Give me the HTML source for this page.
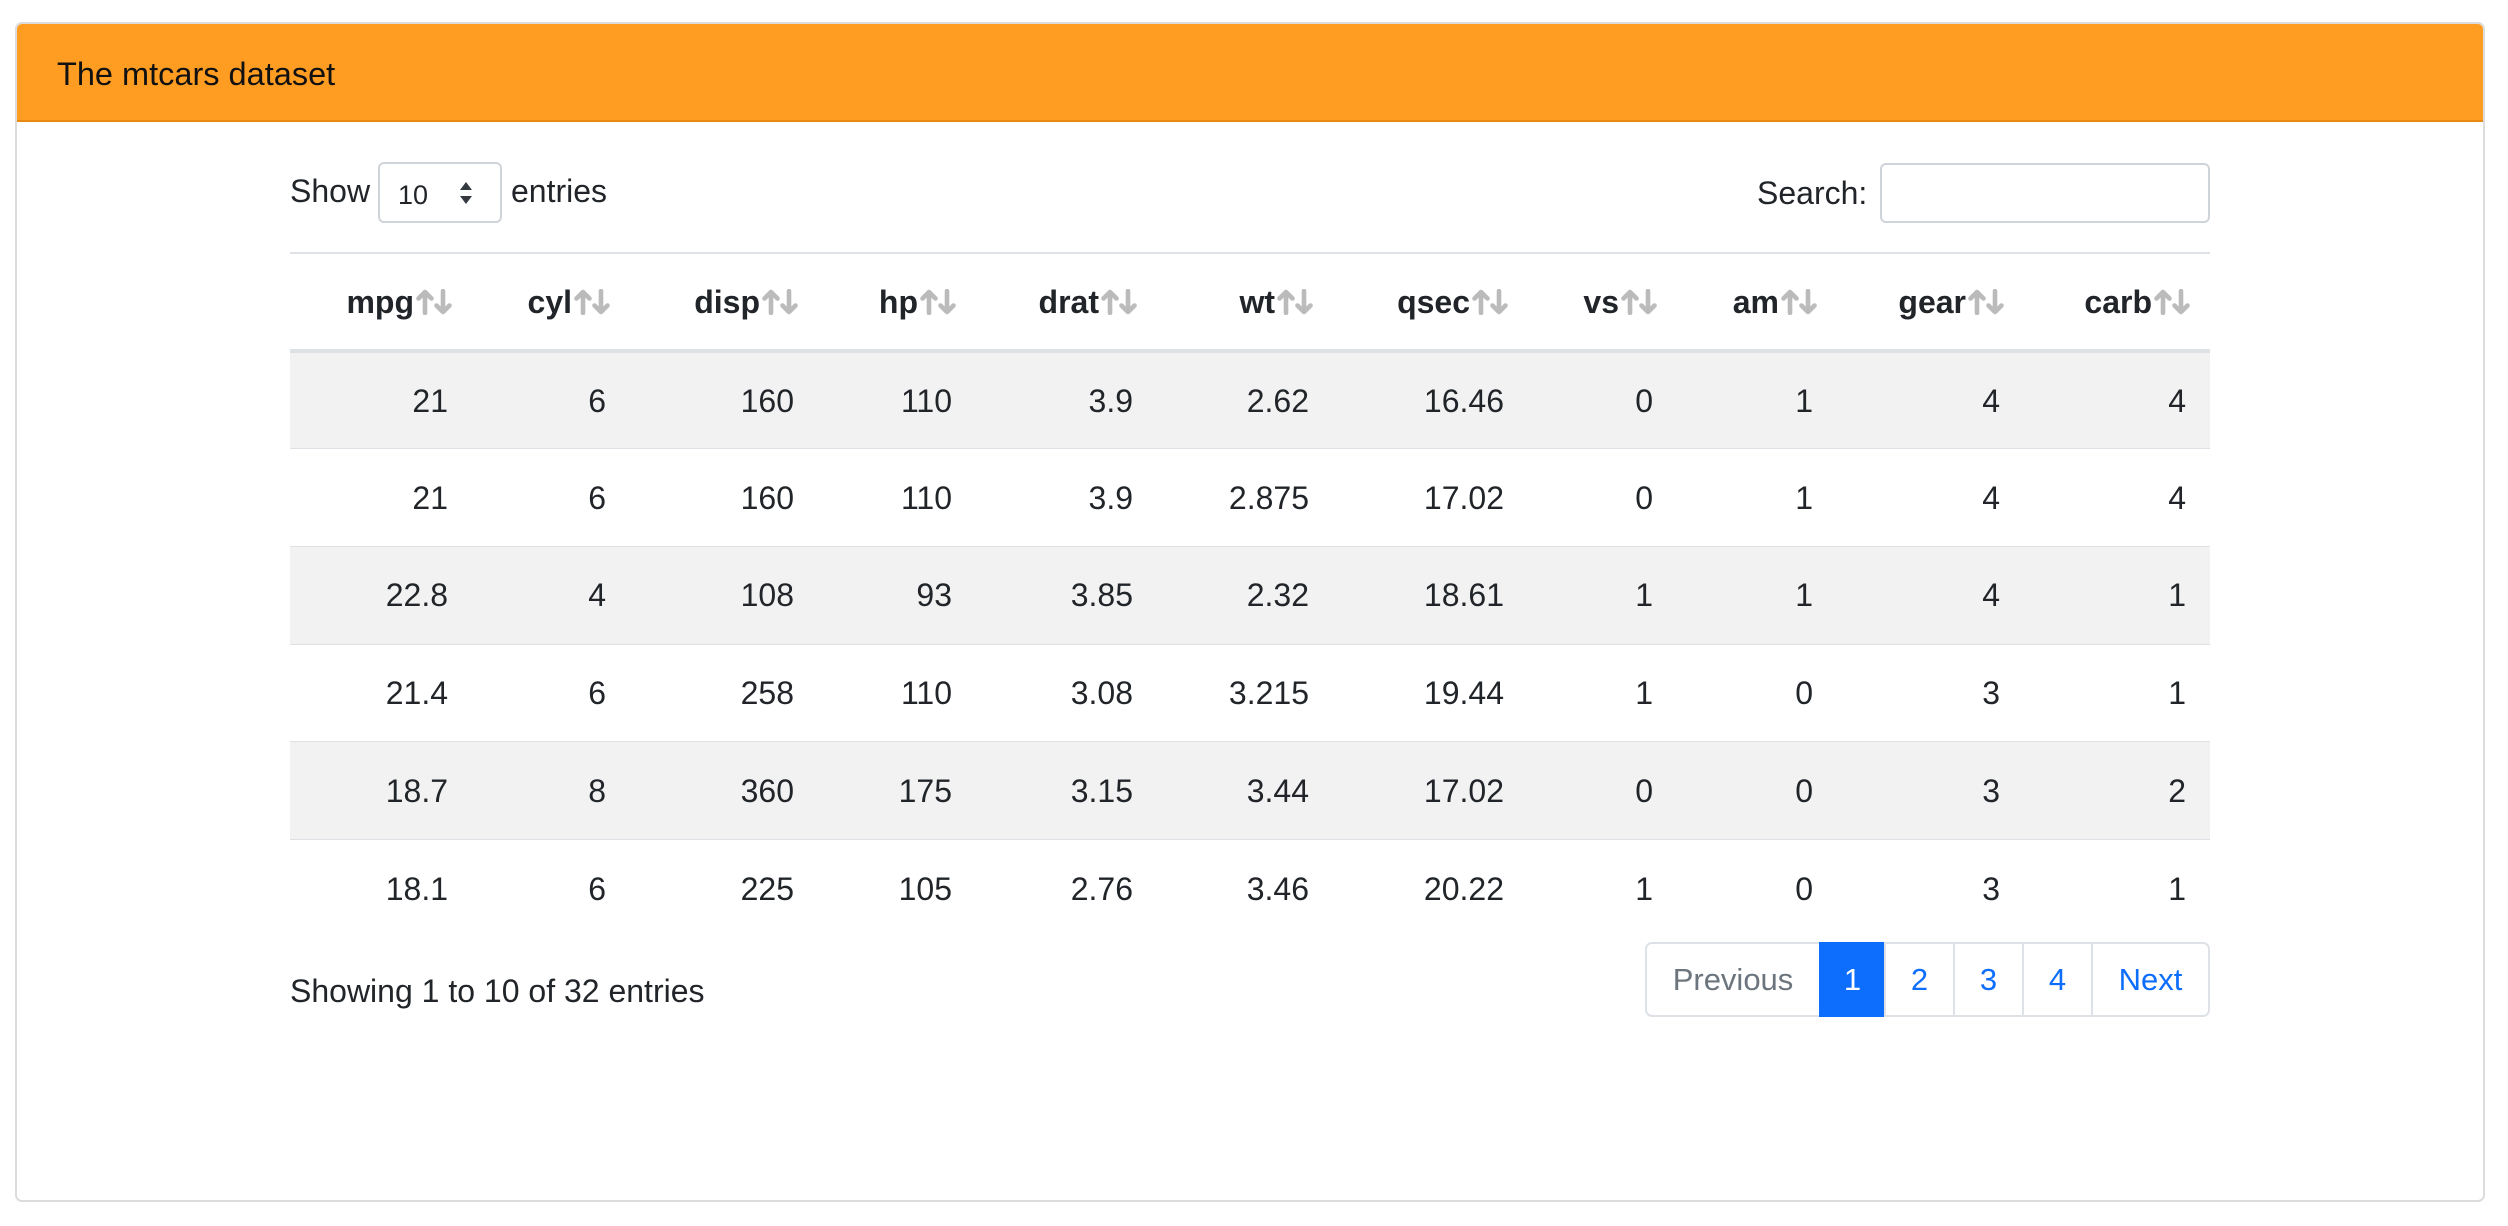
<!DOCTYPE html>
<html><head><meta charset="utf-8"><style>
*{box-sizing:border-box;margin:0;padding:0}
body{width:2508px;height:1226px;background:#fff;font-family:"Liberation Sans",Arial,sans-serif;color:#212529;position:relative;overflow:hidden;font-size:32px;line-height:1}
.card{position:absolute;left:15px;top:22px;width:2470px;height:1180px;border:2px solid #dcdcdc;border-radius:7px;overflow:hidden}
.hdr{position:absolute;left:0;top:0;right:0;height:98px;background:#ff9d23;border-bottom:2px solid #e88a10}
.hdr span{position:absolute;left:40px;top:34px;font-size:32.5px;color:#111}
.abs{position:absolute}
.sel{position:absolute;left:378px;top:162px;width:124px;height:61px;border:2px solid #ced4da;border-radius:6px;font-size:27px}
.inp{position:absolute;left:1880px;top:163px;width:330px;height:60px;border:2px solid #ced4da;border-radius:6px}
table{position:absolute;left:290px;top:252px;width:1920px;border-collapse:collapse}
table th,table td{text-align:right;padding:0 24px 0 0;white-space:nowrap}
thead tr{height:98px;border-top:2px solid #dee2e6;border-bottom:4px solid #dee2e6}
th{font-weight:bold;vertical-align:middle;padding-right:20px!important}
th svg{vertical-align:-2px;margin-left:2px}
tbody tr{height:97.7px;border-bottom:1.6px solid #dee2e6}
tbody tr:last-child{border-bottom:none}
tbody tr:nth-child(odd){background:#f2f2f2}
.pg{position:absolute;top:942px;height:75px;border:2px solid #dee2e6;display:flex;align-items:center;justify-content:center;color:#0d6efd;font-size:31px;background:#fff}
</style></head><body>
<div class="card"><div class="hdr"><span>The mtcars dataset</span></div></div>
<div class="abs" style="left:290px;top:175px">Show</div>
<div class="sel"><span class="abs" style="left:18px;top:18px">10</span>
<svg class="abs" style="left:79px;top:17px" width="14" height="24" viewBox="0 0 14 24"><path d="M7 1 L13 9 H1Z M7 23 L13 15 H1Z" fill="#343a40"/></svg></div>
<div class="abs" style="left:511px;top:175px">entries</div>
<div class="abs" style="left:1757px;top:177px">Search:</div>
<div class="inp"></div>
<table>
<colgroup><col style="width:182px"><col style="width:158px"><col style="width:188px"><col style="width:158px"><col style="width:181px"><col style="width:176px"><col style="width:195px"><col style="width:149px"><col style="width:160px"><col style="width:187px"><col style="width:186px"></colgroup>
<thead><tr>
<th>mpg<svg width="36" height="26" viewBox="0 0 36 26"><g stroke="#bbb" stroke-width="4.6" fill="none" stroke-linecap="round" stroke-linejoin="round"><path d="M9 24V3M2.5 9.5L9 3L15.5 9.5"/><path d="M27 2V23M20.5 16.5L27 23L33.5 16.5"/></g></svg></th>
<th>cyl<svg width="36" height="26" viewBox="0 0 36 26"><g stroke="#bbb" stroke-width="4.6" fill="none" stroke-linecap="round" stroke-linejoin="round"><path d="M9 24V3M2.5 9.5L9 3L15.5 9.5"/><path d="M27 2V23M20.5 16.5L27 23L33.5 16.5"/></g></svg></th>
<th>disp<svg width="36" height="26" viewBox="0 0 36 26"><g stroke="#bbb" stroke-width="4.6" fill="none" stroke-linecap="round" stroke-linejoin="round"><path d="M9 24V3M2.5 9.5L9 3L15.5 9.5"/><path d="M27 2V23M20.5 16.5L27 23L33.5 16.5"/></g></svg></th>
<th>hp<svg width="36" height="26" viewBox="0 0 36 26"><g stroke="#bbb" stroke-width="4.6" fill="none" stroke-linecap="round" stroke-linejoin="round"><path d="M9 24V3M2.5 9.5L9 3L15.5 9.5"/><path d="M27 2V23M20.5 16.5L27 23L33.5 16.5"/></g></svg></th>
<th>drat<svg width="36" height="26" viewBox="0 0 36 26"><g stroke="#bbb" stroke-width="4.6" fill="none" stroke-linecap="round" stroke-linejoin="round"><path d="M9 24V3M2.5 9.5L9 3L15.5 9.5"/><path d="M27 2V23M20.5 16.5L27 23L33.5 16.5"/></g></svg></th>
<th>wt<svg width="36" height="26" viewBox="0 0 36 26"><g stroke="#bbb" stroke-width="4.6" fill="none" stroke-linecap="round" stroke-linejoin="round"><path d="M9 24V3M2.5 9.5L9 3L15.5 9.5"/><path d="M27 2V23M20.5 16.5L27 23L33.5 16.5"/></g></svg></th>
<th>qsec<svg width="36" height="26" viewBox="0 0 36 26"><g stroke="#bbb" stroke-width="4.6" fill="none" stroke-linecap="round" stroke-linejoin="round"><path d="M9 24V3M2.5 9.5L9 3L15.5 9.5"/><path d="M27 2V23M20.5 16.5L27 23L33.5 16.5"/></g></svg></th>
<th>vs<svg width="36" height="26" viewBox="0 0 36 26"><g stroke="#bbb" stroke-width="4.6" fill="none" stroke-linecap="round" stroke-linejoin="round"><path d="M9 24V3M2.5 9.5L9 3L15.5 9.5"/><path d="M27 2V23M20.5 16.5L27 23L33.5 16.5"/></g></svg></th>
<th>am<svg width="36" height="26" viewBox="0 0 36 26"><g stroke="#bbb" stroke-width="4.6" fill="none" stroke-linecap="round" stroke-linejoin="round"><path d="M9 24V3M2.5 9.5L9 3L15.5 9.5"/><path d="M27 2V23M20.5 16.5L27 23L33.5 16.5"/></g></svg></th>
<th>gear<svg width="36" height="26" viewBox="0 0 36 26"><g stroke="#bbb" stroke-width="4.6" fill="none" stroke-linecap="round" stroke-linejoin="round"><path d="M9 24V3M2.5 9.5L9 3L15.5 9.5"/><path d="M27 2V23M20.5 16.5L27 23L33.5 16.5"/></g></svg></th>
<th>carb<svg width="36" height="26" viewBox="0 0 36 26"><g stroke="#bbb" stroke-width="4.6" fill="none" stroke-linecap="round" stroke-linejoin="round"><path d="M9 24V3M2.5 9.5L9 3L15.5 9.5"/><path d="M27 2V23M20.5 16.5L27 23L33.5 16.5"/></g></svg></th>
</tr></thead>
<tbody>
<tr><td>21</td><td>6</td><td>160</td><td>110</td><td>3.9</td><td>2.62</td><td>16.46</td><td>0</td><td>1</td><td>4</td><td>4</td></tr>
<tr><td>21</td><td>6</td><td>160</td><td>110</td><td>3.9</td><td>2.875</td><td>17.02</td><td>0</td><td>1</td><td>4</td><td>4</td></tr>
<tr><td>22.8</td><td>4</td><td>108</td><td>93</td><td>3.85</td><td>2.32</td><td>18.61</td><td>1</td><td>1</td><td>4</td><td>1</td></tr>
<tr><td>21.4</td><td>6</td><td>258</td><td>110</td><td>3.08</td><td>3.215</td><td>19.44</td><td>1</td><td>0</td><td>3</td><td>1</td></tr>
<tr><td>18.7</td><td>8</td><td>360</td><td>175</td><td>3.15</td><td>3.44</td><td>17.02</td><td>0</td><td>0</td><td>3</td><td>2</td></tr>
<tr><td>18.1</td><td>6</td><td>225</td><td>105</td><td>2.76</td><td>3.46</td><td>20.22</td><td>1</td><td>0</td><td>3</td><td>1</td></tr>
</tbody></table>
<div class="abs" style="left:290px;top:975px">Showing 1 to 10 of 32 entries</div>
<div class="pg" style="left:1645px;width:176px;color:#6c757d;border-radius:7px 0 0 7px">Previous</div>
<div class="pg" style="left:1819px;width:67px;background:#0d6efd;border-color:#0d6efd;color:#fff">1</div>
<div class="pg" style="left:1884px;width:71px">2</div>
<div class="pg" style="left:1953px;width:71px">3</div>
<div class="pg" style="left:2022px;width:71px">4</div>
<div class="pg" style="left:2091px;width:119px;border-radius:0 7px 7px 0">Next</div>
</body></html>
